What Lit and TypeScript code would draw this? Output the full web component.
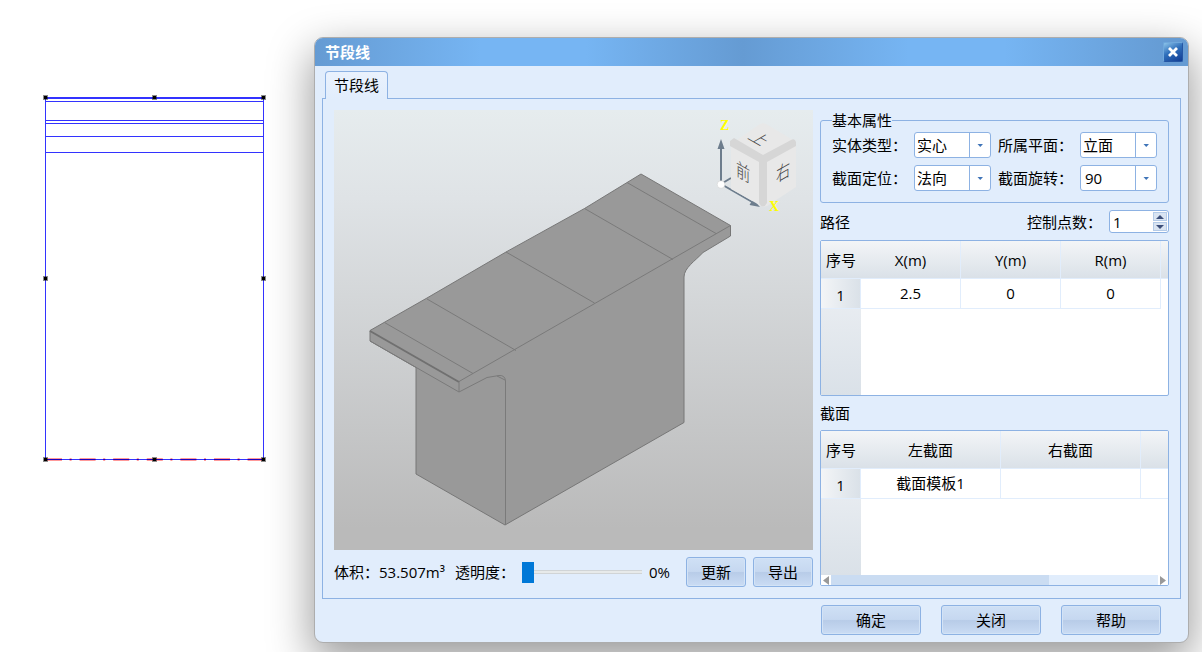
import { LitElement, html, css, svg } from "lit";
import { customElement, property, state } from "lit/decorators.js";

const base = css`
  * {
    box-sizing: border-box;
  }
  button,
  input,
  select {
    font: inherit;
    color: inherit;
    margin: 0;
  }
`;

@customElement("section-sketch")
class SectionSketch extends LitElement {
  static styles = css`
    :host {
      display: block;
    }
    svg {
      display: block;
    }
    .edge {
      stroke: #3333ff;
      fill: none;
    }
    .thick {
      stroke-width: 2;
    }
    .axis {
      stroke: #ff0000;
      stroke-opacity: 0.4;
      stroke-width: 3;
      stroke-dasharray: 16 7.6 2 8;
    }
    .core {
      stroke: #1a00c0;
      stroke-dasharray: 16 7.6 2 8;
    }
    .halo {
      fill: #000;
      fill-opacity: 0.45;
    }
    .grip {
      fill: #000;
    }
  `;
  render() {
    const grips = [
      [2, 2], [111, 2], [220, 2], [2, 183], [220, 183], [2, 364], [111, 364], [220, 364],
    ];
    return html`<svg width="224" height="368" viewBox="0 0 224 368" role="img" aria-label="截面轮廓">
      <g class="edge">
        <path d="M2.5 3V364.5M220.5 3V364.5" />
        <path class="thick" d="M2 3H221" />
        <path d="M2 6.5H221M2 25.5H221M2 28.5H221M2 41.5H221M2 57.5H221M2 364.5H221" />
      </g>
      <path class="axis" d="M3 364.5H220" />
      <path class="core" d="M3 364.5H220" />
      ${grips.map(
        ([x, y]) => svg`<rect class="halo" x=${x - 2} y=${y - 2} width="5" height="5" />
          <rect class="grip" x=${x - 1} y=${y - 1} width="3" height="3" />`
      )}
    </svg>`;
  }
}

@customElement("model-view")
class ModelView extends LitElement {
  @property({ type: Number }) opacity = 1;
  static styles = css`
    :host {
      display: block;
      min-height: 440px;
      background: linear-gradient(#e6ecee 0%, #dfe3e6 20%, #bababa 95%);
    }
    svg {
      display: block;
      width: 100%;
      height: 100%;
    }
    .solid {
      fill: #999;
      stroke: #777;
      stroke-linejoin: round;
    }
    .line {
      fill: none;
      stroke: #7a7a7a;
    }
    .front {
      stroke: #707070;
      stroke-width: 2;
    }
    .arm {
      stroke: #6d7d8d;
      stroke-width: 2;
    }
    .head {
      fill: #6d7d8d;
    }
    .face {
      fill: #e8e8e8;
    }
    .bevel {
      fill: #d6d6d6;
    }
    .axis-name {
      font: bold 14px "Liberation Serif", serif;
      fill: #ffff00;
    }
    .face-name {
      font: 19px "Noto Sans CJK SC", sans-serif;
      fill: #444;
      text-anchor: middle;
      font-weight: 300;
    }
  `;
  render() {
    return html`<svg viewBox="0 0 479 440" role="img" aria-label="三维模型">
      <g opacity=${this.opacity}>
        <path
          class="solid"
          d="M307 64L396.500 115.500V126L369 142.500C361 151 350 158 350 167V312.500L171 415L82 364V257.500L36 231V220.500L93 188L172 142L250.500 98.500Z"
        />
        <path class="line" d="M125 271.500L396.500 115.500" />
        <path class="line" d="M50.500 212.500L139 263.500M93 189L182 240.500M172 142L260.500 193M250.500 98.500L339 149.500M293 72.500L382 123.500" />
        <path class="line front" d="M36 221L125 272" />
        <path class="line" d="M36 231L125 282V271.500M125 282L153 267.500L165 265.500Q171 265 171.500 271V415M163 266L171 270" />
      </g>
      <g>
        <path class="arm" d="M387 74V38M387 74L420 93M387 74L397 68" />
        <path class="head" d="M387 29L390.500 39H383.500ZM426 97L415.500 95L419 89Z" />
        <circle cx="387" cy="74.500" r="3.800" fill="#fff" stroke="#ccc" stroke-width="0.500" />
        <path class="face" d="M400 32L426 14Q429 12.500 432 14L459 30L462 34V77L433 96L429 97L397 79V32Z" />
        <path class="bevel" d="M396 31L400 28L429 45L457 30Q461 28 462 32V36L433 52V93Q429 100 425 93V52L396 36Z" />
        <text class="axis-name" x="386" y="20">Z</text>
        <text class="axis-name" x="435" y="101">X</text>
        <text class="face-name" transform="matrix(.75 .43 0 1 409 69)">前</text>
        <text class="face-name" transform="matrix(.75 -.43 0 1 449 69)">右</text>
        <text class="face-name" transform="matrix(.75 .43 -.78 .45 420 32)">上</text>
      </g>
    </svg>`;
  }
}

@customElement("data-grid")
class DataGrid extends LitElement {
  @property({ type: Array }) columns: string[] = [];
  @property({ type: Array }) rows: string[][] = [];
  @property({ type: Number }) columnWidth = 100;
  @property({ type: Boolean }) scroll = false;
  static styles = [
    base,
    css`
      :host {
        display: flex;
        flex-direction: column;
        overflow: hidden;
        background: #fff;
        border: 1px solid #8db2e3;
        border-radius: 2px;
      }
      .body {
        flex: 1;
        overflow: hidden;
        background: linear-gradient(#f2f4f7, #dae1e8) left / 40px 100% no-repeat;
      }
      table {
        border-collapse: separate;
        border-spacing: 0;
        table-layout: fixed;
        width: 100%;
      }
      th,
      td {
        padding: 0;
        text-align: center;
        font-weight: normal;
        border-right: 1px solid #e1edfc;
        border-bottom: 1px solid #e1edfc;
        white-space: nowrap;
        overflow: hidden;
      }
      thead th {
        height: 38px;
        background: linear-gradient(#f3f5f7, #dae1e8);
      }
      thead th:first-child {
        border-right: 0;
      }
      .index {
        width: 40px;
      }
      tbody th {
        background: linear-gradient(90deg, #f3f5f7, #dae1e8);
        padding-top: 2px;
      }
      tbody td {
        height: 30px;
        background: #fff;
        padding-bottom: 2px;
      }
      .rest {
        border-right: 0;
      }
      .open .rest-cell {
        border: 0;
      }
      .bar {
        display: grid;
        grid-template-columns: 10px 1fr 10px;
        height: 10px;
      }
      .step {
        padding: 0;
        border: 0;
        background: #fff;
        display: grid;
        place-items: center;
      }
      .step path {
        fill: #999;
      }
      .track {
        background: #e1edfc;
      }
      .thumb {
        width: 66.6%;
        height: 100%;
        background: #cadcf2;
      }
    `,
  ];
  render() {
    return html`<div class="body">
        <table class=${this.scroll ? "" : "open"}>
          <colgroup>
            <col class="index" />
            ${this.columns.map(() => html`<col style="width:${this.columnWidth}px" />`)}
            <col />
          </colgroup>
          <thead>
            <tr>
              <th scope="col">序号</th>
              ${this.columns.map((c) => html`<th scope="col">${c}</th>`)}
              <th class="rest"></th>
            </tr>
          </thead>
          <tbody>
            ${this.rows.map(
              (r, i) => html`<tr>
                <th scope="row">${i + 1}</th>
                ${r.map((v) => html`<td>${v}</td>`)}
                <td class="rest rest-cell"></td>
              </tr>`
            )}
          </tbody>
        </table>
      </div>
      ${this.scroll
        ? html`<div class="bar">
            <button class="step" aria-label="向左滚动">
              <svg width="6" height="9"><path d="M6 0V9L0 4.500Z" /></svg>
            </button>
            <div class="track"><div class="thumb"></div></div>
            <button class="step" aria-label="向右滚动">
              <svg width="6" height="9"><path d="M0 0V9L6 4.500Z" /></svg>
            </button>
          </div>`
        : ""}`;
  }
}

@customElement("app-root")
class AppRoot extends LitElement {
  @state() private transparency = 0;
  @state() private points = 1;

  static styles = [
    base,
    css`
      :host {
        display: grid;
        grid-template-columns: 314px minmax(0, 1fr);
        align-items: start;
        min-height: 100vh;
        box-sizing: border-box;
        overflow: hidden;
        padding-right: 13px;
        background: #fff;
        color: #000;
        font: 15px/20px "Open Sans", "Noto Sans CJK SC", sans-serif;
      }
      .sketch {
        margin: 95px 0 0 43px;
      }
      .dialog {
        margin: 37px 0 10px;
        border: 1px solid #adadad;
        border-radius: 9px;
        overflow: hidden;
        background: #e1edfc;
        box-shadow: 0 16px 44px 2px rgba(0, 0, 0, 0.4);
      }
      .title {
        display: flex;
        align-items: center;
        justify-content: space-between;
        height: 28px;
        padding: 0 5px 0 10px;
        background: linear-gradient(90deg, #659bd3 0%, #76b5f3 19%, #76b5f3 31%, #659bd3 49%, #76b5f3 68%, #76b5f3 79%, #659bd3 98%);
        color: #fff;
      }
      h1 {
        margin: 0;
        font-size: 15px;
        line-height: 20px;
        font-weight: bold;
      }
      .close {
        display: grid;
        place-items: center;
        width: 20px;
        height: 20px;
        padding: 0;
        border: 1px solid #2456a4;
        border-top-color: #6fa8dc;
        border-left-color: #6fa8dc;
        border-radius: 2px;
        background: linear-gradient(150deg, #8cc4ea, #2f6fbb 45%, #123c93);
      }
      .tabs {
        display: flex;
        padding: 5px 10px 0;
      }
      .tab {
        width: 63px;
        height: 28px;
        margin-bottom: -1px;
        padding: 0 0 2px;
        border: 1px solid #8db2e3;
        border-bottom: 0;
        border-radius: 4px 4px 0 0;
        background: linear-gradient(#eaf2fd, #e1edfc);
        position: relative;
      }
      .panel {
        display: grid;
        grid-template-columns: minmax(0, 1fr) 349px;
        gap: 7px;
        margin: 0 7px;
        padding: 11px;
        border: 1px solid #8db2e3;
      }
      .left,
      .right {
        display: flex;
        flex-direction: column;
      }
      model-view {
        flex: 1;
      }
      .status {
        display: flex;
        align-items: center;
        height: 30px;
        margin-top: 7px;
        gap: 7px;
        white-space: nowrap;
      }
      .volume {
        width: 114px;
      }
      .clear {
        width: 60px;
      }
      .push {
        border: 1px solid #8db2e3;
        border-radius: 3px;
        height: 30px;
        padding: 0;
        box-shadow: inset 0 0 0 1px #d3e3f6;
        background: linear-gradient(#cfe0f5, #c6d8f0 48%, #b8cce8 52%, #cadcf4);
      }
      .small {
        width: 60px;
      }
      .percent {
        flex: 1;
      }
      .slider {
        appearance: none;
        flex: 0 0 120px;
        width: 120px;
        height: 21px;
        background: linear-gradient(#e7eaea, #e7eaea) center / 100% 2px no-repeat,
          linear-gradient(#d0d4d6, #d0d4d6) center / 100% 4px no-repeat;
      }
      .slider::-webkit-slider-thumb {
        appearance: none;
        width: 12px;
        height: 21px;
        background: #0078d7;
      }
      fieldset {
        min-width: 0;
        margin: 0;
        padding: 2px 11px 11px;
        border: 1px solid #8db2e3;
        border-radius: 3px;
        display: grid;
        grid-template-columns: 82px 77px 89px 77px;
        row-gap: 7px;
        align-items: center;
        white-space: nowrap;
      }
      legend {
        padding: 0;
        line-height: 20px;
      }
      .second {
        padding-left: 7px;
      }
      .pick {
        position: relative;
      }
      select {
        appearance: none;
        width: 77px;
        height: 26px;
        padding: 0 22px 0 2px;
        border: 1px solid #8db2e3;
        border-radius: 3px;
        background: #fff;
        display: block;
      }
      .number {
        padding-left: 4px;
      }
      .pick svg {
        position: absolute;
        right: 0;
        top: 0;
        pointer-events: none;
      }
      .row {
        display: flex;
        align-items: center;
        height: 23px;
      }
      .path {
        margin: 7px 0;
      }
      h2 {
        margin: 0;
        flex: 1;
        font-size: 15px;
        line-height: 20px;
        font-weight: normal;
      }
      .count {
        width: 82px;
      }
      .spin {
        display: grid;
        grid-template-columns: 1fr 14px;
        width: 60px;
        height: 23px;
        border: 1px solid #8db2e3;
        border-radius: 3px;
        background: #fff;
        padding: 1px;
      }
      .spin input {
        appearance: textfield;
        min-width: 0;
        width: 100%;
        height: 19px;
        border: 0;
        padding: 0 2px;
        background: none;
      }
      .spin input::-webkit-inner-spin-button {
        appearance: none;
      }
      .arrows {
        display: grid;
        grid-template-rows: 1fr 1fr;
        gap: 1px;
      }
      .arrows button {
        display: grid;
        place-items: center;
        padding: 0;
        border: 1px solid #b4cbe8;
        background: #d9e4f2;
      }
      .sections {
        height: 34px;
      }
      data-grid {
        height: 156px;
      }
      .footer {
        display: flex;
        justify-content: flex-end;
        gap: 20px;
        padding: 6px 27px 7px;
      }
      .wide {
        width: 100px;
      }
    `,
  ];

  private pick(id: string, label: string, options: string[], second = false) {
    return html`<label for=${id} class=${second ? "second" : ""}>${label}：</label>
      <span class="pick">
        <select id=${id} class=${isNaN(Number(options[0])) ? "" : "number"}>
          ${options.map((o) => html`<option>${o}</option>`)}
        </select>
        <svg width="22" height="26" aria-hidden="true">
          <path d="M0.500 1V25" stroke="#8db2e3" />
          <path d="M8.500 12H14L11.250 15Z" fill="#3f74b8" />
        </svg>
      </span>`;
  }

  private step(by: number) {
    this.points = Math.max(1, this.points + by);
  }

  render() {
    return html`
      <section-sketch class="sketch"></section-sketch>
      <div class="dialog" role="dialog" aria-labelledby="title">
        <header class="title">
          <h1 id="title">节段线</h1>
          <button class="close" aria-label="关闭窗口">
            <svg width="14" height="12" viewBox="0 0 14 12">
              <path d="M3 2L11 10M11 2L3 10" stroke="#fff" stroke-width="2.800" />
            </svg>
          </button>
        </header>
        <div class="tabs" role="tablist">
          <button class="tab" role="tab" aria-selected="true">节段线</button>
        </div>
        <div class="panel" role="tabpanel">
          <div class="left">
            <model-view .opacity=${1 - this.transparency / 100}></model-view>
            <div class="status">
              <span class="volume">体积：53.507m³</span>
              <label class="clear" for="clear">透明度：</label>
              <input
                id="clear"
                class="slider"
                type="range"
                min="0"
                max="100"
                .value=${String(this.transparency)}
                @input=${(e: Event) => (this.transparency = Number((e.target as HTMLInputElement).value))}
              />
              <span class="percent">${this.transparency}%</span>
              <button class="push small">更新</button>
              <button class="push small">导出</button>
            </div>
          </div>
          <div class="right">
            <fieldset>
              <legend>基本属性</legend>
              ${this.pick("kind", "实体类型", ["实心", "空心"])}
              ${this.pick("plane", "所属平面", ["立面", "平面"], true)}
              ${this.pick("align", "截面定位", ["法向", "竖向"])}
              ${this.pick("turn", "截面旋转", ["90", "0"], true)}
            </fieldset>
            <div class="row path">
              <h2>路径</h2>
              <label class="count" for="points">控制点数：</label>
              <span class="spin">
                <input id="points" type="number" .value=${String(this.points)} />
                <span class="arrows">
                  <button aria-label="增加" @click=${() => this.step(1)}>
                    <svg width="8" height="4"><path d="M0 4L4 0L8 4Z" fill="#3c4f7a" /></svg>
                  </button>
                  <button aria-label="减少" @click=${() => this.step(-1)}>
                    <svg width="8" height="4"><path d="M0 0L4 4L8 0Z" fill="#3c4f7a" /></svg>
                  </button>
                </span>
              </span>
            </div>
            <data-grid
              .columns=${["X(m)", "Y(m)", "R(m)"]}
              .rows=${[["2.5", "0", "0"]]}
              .columnWidth=${100}
            ></data-grid>
            <div class="row sections"><h2>截面</h2></div>
            <data-grid
              .columns=${["左截面", "右截面"]}
              .rows=${[["截面模板1", ""]]}
              .columnWidth=${140}
              .scroll=${true}
            ></data-grid>
          </div>
        </div>
        <footer class="footer">
          <button class="push wide">确定</button>
          <button class="push wide">关闭</button>
          <button class="push wide">帮助</button>
        </footer>
      </div>
    `;
  }
}
